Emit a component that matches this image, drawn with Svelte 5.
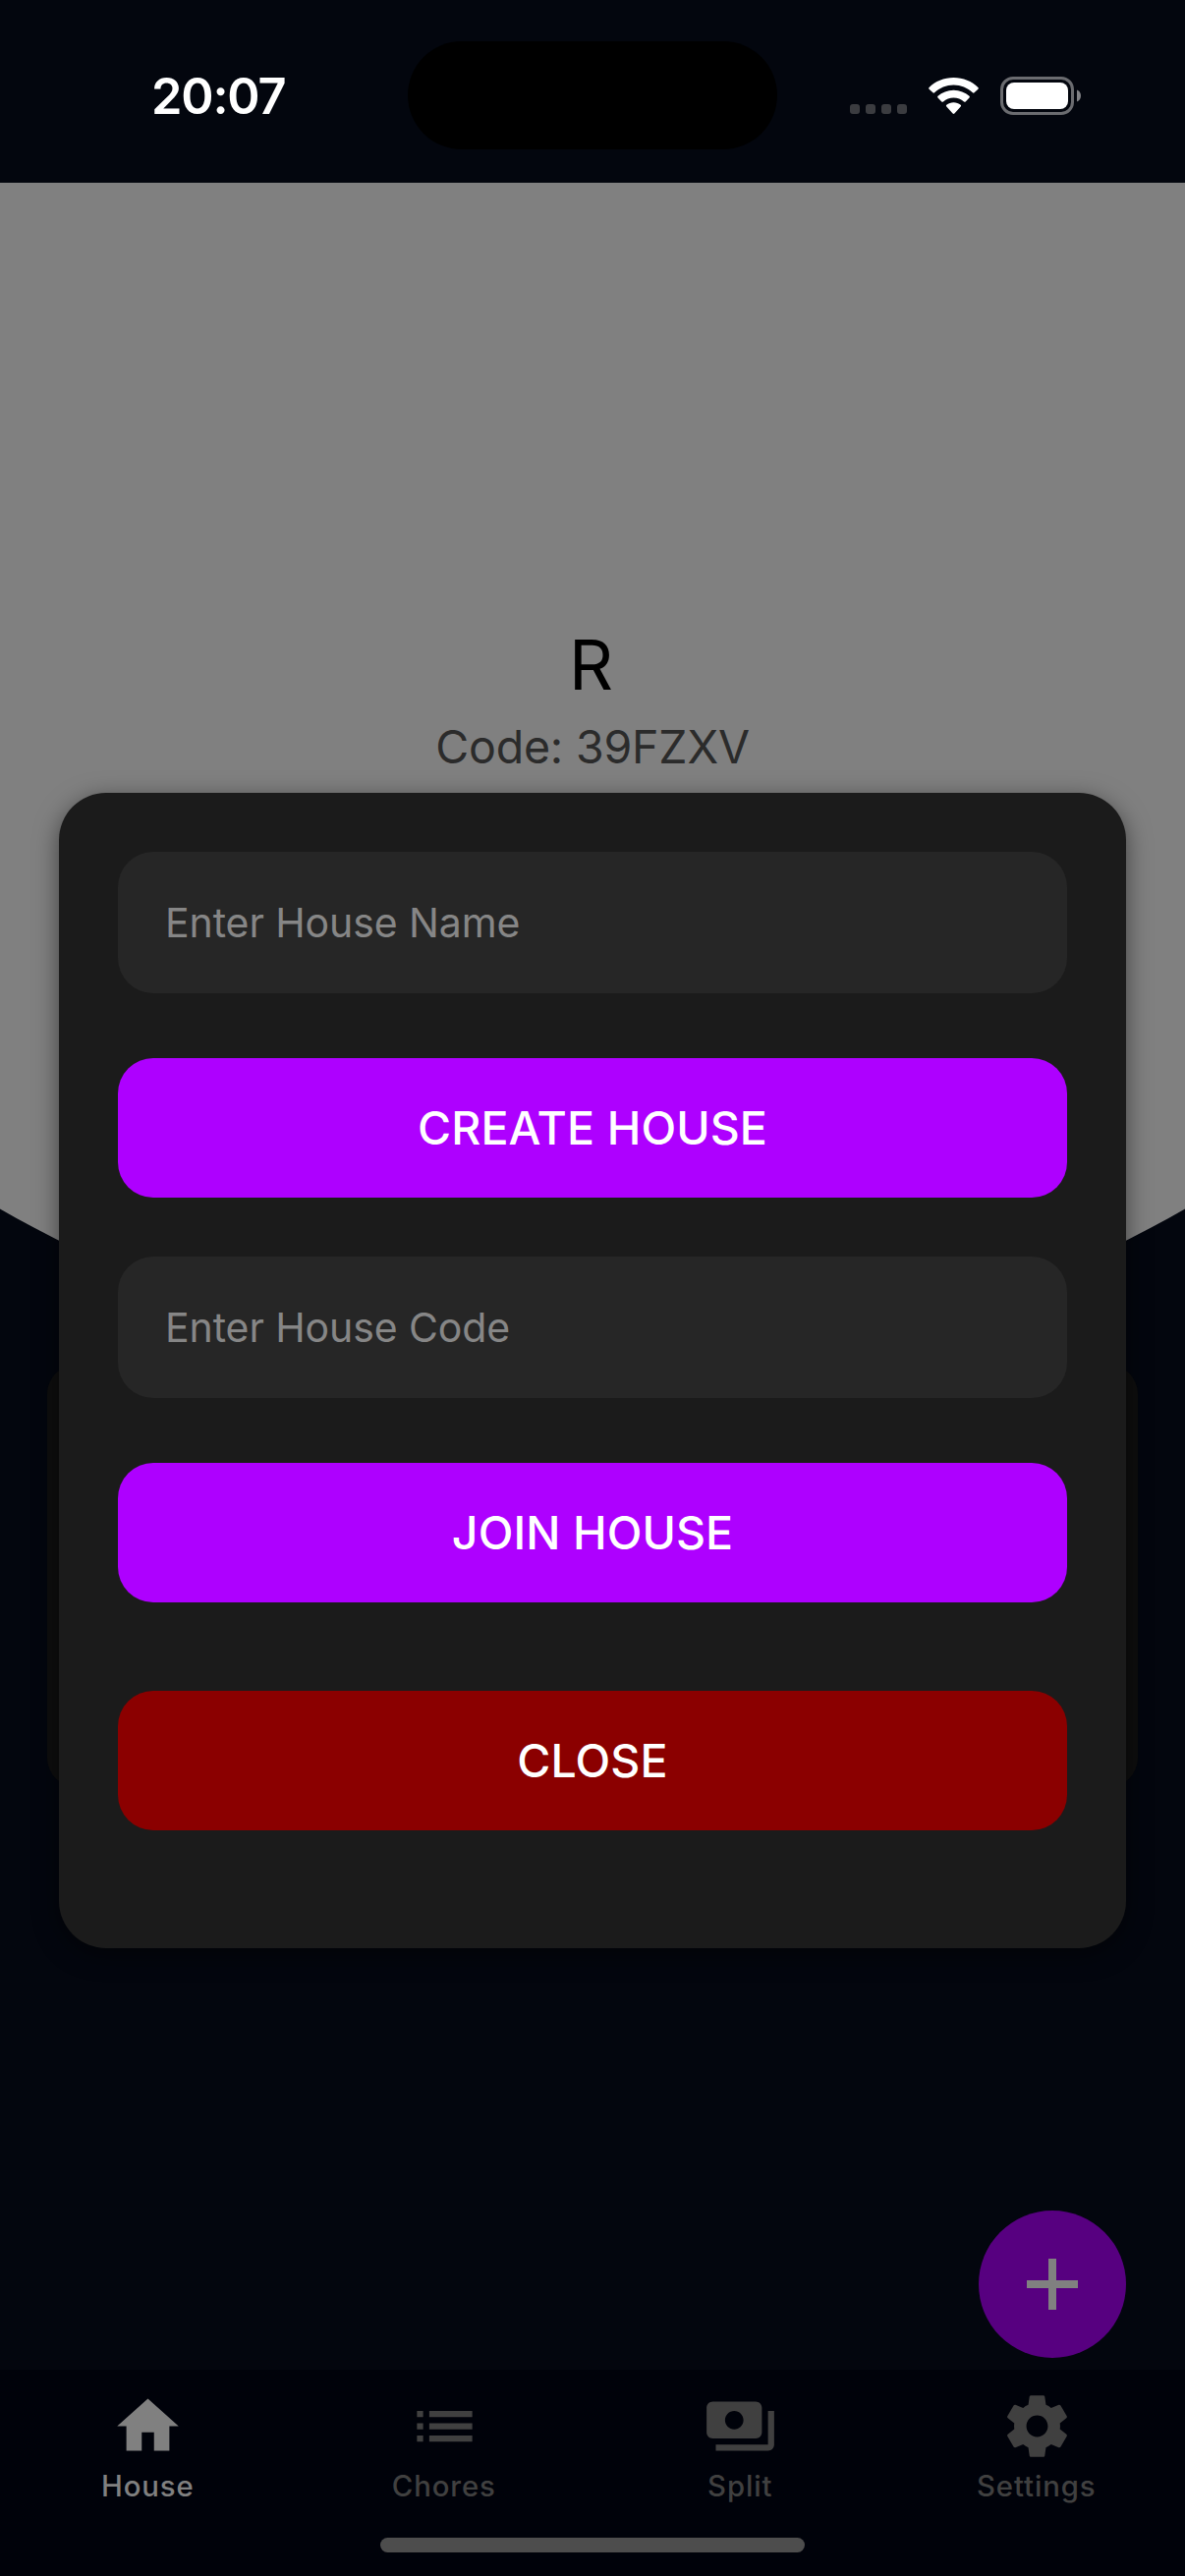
<script>
  const tabs = [
    { label: 'House', active: true, path: 'M10 20v-6h4v6h5v-8h3L12 3 2 12h3v8z' },
    { label: 'Chores', active: false, path: 'M3 13h2v-2H3v2zm0 4h2v-2H3v2zm0-8h2V7H3v2zm4 4h14v-2H7v2zm0 4h14v-2H7v2zM7 7v2h14V7H7z' },
    { label: 'Split', active: false, path: 'M19 14V6c0-1.1-.9-2-2-2H3c-1.1 0-2 .9-2 2v8c0 1.1.9 2 2 2h14c1.1 0 2-.9 2-2zm-9-1c-1.66 0-3-1.34-3-3s1.34-3 3-3 3 1.34 3 3-1.34 3-3 3zm13-6v11c0 1.1-.9 2-2 2H4v-2h17V7h2z' },
    { label: 'Settings', active: false, path: 'M19.43 12.98c.04-.32.07-.64.07-.98s-.03-.66-.07-.98l2.11-1.65c.19-.15.24-.42.12-.64l-2-3.46c-.12-.22-.39-.3-.61-.22l-2.49 1c-.52-.4-1.08-.73-1.69-.98l-.38-2.65C14.46 2.18 14.25 2 14 2h-4c-.25 0-.46.18-.49.42l-.38 2.65c-.61.25-1.17.59-1.69.98l-2.49-1c-.23-.09-.49 0-.61.22l-2 3.46c-.13.22-.07.49.12.64l2.11 1.65c-.04.32-.07.65-.07.98s.03.66.07.98l-2.11 1.65c-.19.15-.24.42-.12.64l2 3.46c.12.22.39.3.61.22l2.49-1c.52.4 1.08.73 1.69.98l.38 2.65c.03.24.24.42.49.42h4c.25 0 .46-.18.49-.42l.38-2.65c.61-.25 1.17-.59 1.69-.98l2.49 1c.23.09.49 0 .61-.22l2-3.46c.12-.22.07-.49-.12-.64l-2.11-1.65zM12 15.5c-1.93 0-3.5-1.57-3.5-3.5s1.57-3.5 3.5-3.5 3.5 1.57 3.5 3.5-1.57 3.5-3.5 3.5z' }
  ];
  let houseName = $state('');
  let houseCode = $state('');
</script>

<div class="screen">
  <header class="status">
    <div class="time">20:07</div>
    <div class="island"></div>
    <div class="indicators">
      <div class="dots"><i></i><i></i><i></i><i></i></div>
      <svg class="wifi" viewBox="0 0 51 38">
        <path d="M25.5 0C35.3 0 44.2 3.8 50.4 9.9q.9.9 0 1.8L46.6 15.3q-.8.8-1.7 0C39.6 10.300 32.900 7.400 25.500 7.400S11.400 10.300 6.100 15.300q-.9.8-1.700 0L.6 11.700q-.9-.9 0-1.800C6.800 3.800 15.700 0 25.500 0z" />
        <path d="M25.500 12.700c6.200 0 11.700 2.300 16 6.100q.9.900 0 1.800L37.700 24.400q-.8.700-1.700 0c-2.900-2.400-6.500-3.900-10.500-3.900s-7.600 1.500-10.500 3.900q-.9.700-1.700 0L9.500 20.600q-.9-.9 0-1.800c4.300-3.800 9.800-6.100 16-6.100z" />
        <path d="M25.500 25.300c2.700 0 5.200.9 7.200 2.500q.9.800 0 1.700L26.400 36.600q-.9.900-1.800 0L18.300 29.500q-.9-.9 0-1.700c2-1.600 4.500-2.500 7.200-2.500z" />
      </svg>
      <svg class="battery" viewBox="0 0 82 39">
        <rect x="1.500" y="1.500" width="72" height="36" rx="11.500" fill="none" stroke="#6b6c70" stroke-width="3" />
        <rect x="6" y="6" width="63" height="27" rx="8" fill="#fff" />
        <path d="M78 13.500c2.600 1 4 3.300 4 6s-1.400 5-4 6z" fill="#818286" />
      </svg>
    </div>
  </header>

  <main class="page">
    <section class="hero">
      <h1>R</h1>
      <p>Code: 39FZXV</p>
    </section>
    <section class="card"></section>
    <button class="fab" aria-label="Add">
      <svg viewBox="0 0 52 52"><path d="M22 0h8v22h22v8H30v22h-8V30H0v-8h22z" /></svg>
    </button>
  </main>

  <nav class="tabs">
    {#each tabs as tab}
      <div class="tab" class:active={tab.active}>
        <svg viewBox="0 0 24 24"><path d={tab.path} /></svg>
        <span>{tab.label}</span>
      </div>
    {/each}
  </nav>
  <div class="home-bar"></div>

  <div class="modal">
    <input placeholder="Enter House Name" bind:value={houseName} />
    <button class="primary">CREATE HOUSE</button>
    <input placeholder="Enter House Code" bind:value={houseCode} />
    <button class="primary">JOIN HOUSE</button>
    <button class="close">CLOSE</button>
  </div>
</div>

<style>
  :global(body) {
    margin: 0;
    background: #03060e;
  }
  .screen {
    position: relative;
    display: flex;
    flex-direction: column;
    width: 1206px;
    height: 2622px;
    overflow: hidden;
    background: #03060e;
    font-family: Inter, 'Liberation Sans', sans-serif;
  }
  .status {
    display: grid;
    grid-template-columns: 415px 376px 415px;
    height: 186px;
    color: #fff;
  }
  .time {
    padding: 67px 0 0 154px;
    font-size: 50.500px;
    line-height: 62px;
    font-weight: 600;
    letter-spacing: -1.200px;
  }
  .island {
    height: 110px;
    margin-top: 42px;
    border-radius: 55px;
    background: #000;
  }
  .indicators {
    display: flex;
    align-items: flex-start;
    padding: 78px 0 0 74px;
  }
  .dots {
    display: flex;
    gap: 6px;
    padding-top: 28px;
  }
  .dots i {
    width: 10px;
    height: 10px;
    border-radius: 3px;
    background: #3b3c40;
  }
  .wifi {
    width: 51px;
    height: 38px;
    margin: 1px 0 0 22px;
    fill: #fff;
  }
  .battery {
    width: 82px;
    height: 39px;
    margin-left: 22px;
  }
  .page {
    display: flex;
    flex-direction: column;
    height: 2226px;
    overflow: hidden;
  }
  .hero {
    flex: none;
    width: 2412px;
    height: 1206px;
    margin-left: -603px;
    border-radius: 0 0 1206px 1206px;
    background: #808080;
    text-align: center;
  }
  h1 {
    margin: 0 3px 0 0;
    padding-top: 448px;
    font-size: 70px;
    line-height: 86px;
    font-weight: 400;
    color: #000;
  }
  p {
    margin: 12px 0 0;
    font-size: 46.500px;
    line-height: 56px;
    letter-spacing: -0.200px;
    color: #2b2b2b;
  }
  .card {
    flex: none;
    height: 430px;
    margin: -3px 48px 0;
    border-radius: 30px;
    background: #0e0e0e;
  }
  .fab {
    display: grid;
    flex: none;
    place-items: center;
    align-self: flex-end;
    width: 150px;
    height: 150px;
    margin: 431px 60px 0 0;
    padding: 0;
    border: 0;
    border-radius: 50%;
    background: #570080;
  }
  .fab svg {
    width: 52px;
    height: 52px;
    fill: #808080;
  }
  .tabs {
    display: grid;
    grid-template-columns: repeat(4, 1fr);
    height: 171px;
    background: #00020a;
  }
  .tab {
    display: flex;
    flex-direction: column;
    align-items: center;
    padding-top: 20px;
    color: #404040;
  }
  .tab.active {
    color: #808080;
  }
  .tab svg {
    width: 75px;
    height: 75px;
    fill: currentColor;
  }
  .tab span {
    margin: 5px 1px 0 0;
    font-size: 29.300px;
    line-height: 38px;
    font-weight: 500;
    letter-spacing: 0.900px;
  }
  .home-bar {
    flex: 1;
    background: #00020a;
  }
  .home-bar::before {
    content: '';
    display: block;
    width: 432px;
    height: 15px;
    margin: 0 auto;
    border-radius: 8px;
    background: #4d4d4d;
  }
  .modal {
    position: absolute;
    top: 807px;
    left: 60px;
    display: flex;
    flex-direction: column;
    box-sizing: border-box;
    width: 1086px;
    height: 1176px;
    padding: 60px;
    border-radius: 48px;
    background: #1b1b1b;
    box-shadow: 0 6px 24px rgba(0, 0, 0, 0.5);
  }
  input {
    box-sizing: border-box;
    height: 144px;
    padding: 0 48px;
    border: 0;
    border-radius: 36px;
    background: #262626;
    color: #fff;
    font: 400 41px Inter, 'Liberation Sans', sans-serif;
    letter-spacing: -0.100px;
    outline: none;
  }
  input::placeholder {
    color: #868686;
    opacity: 1;
  }
  .modal button {
    height: 142px;
    padding: 0;
    border: 0;
    border-radius: 36px;
    color: #fff;
    font: 500 46.500px Inter, 'Liberation Sans', sans-serif;
    letter-spacing: 0.100px;
  }
  .modal .primary {
    margin: 66px 0 60px;
    background: #ae00ff;
  }
  .modal .close {
    margin-top: 30px;
    background: #8b0000;
  }
</style>
